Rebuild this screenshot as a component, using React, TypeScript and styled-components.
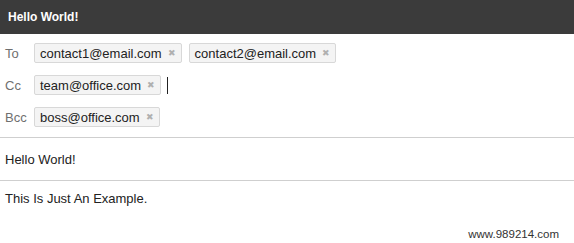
import React, { FC } from "react"
import styled, { createGlobalStyle } from "styled-components"

const GlobalStyle = createGlobalStyle`
  html, body {
    margin: 0;
    padding: 0;
    background: #fff;
  }
  body {
    font-family: "Liberation Sans", Arial, Helvetica, sans-serif;
    color: #222;
  }
`

const Page = styled.div`
  position: relative;
  width: 574px;
  height: 243px;
  overflow: hidden;
  background: #fff;
`

const Header = styled.header`
  height: 34px;
  background: #3b3b3b;
  display: flex;
  align-items: center;
  padding: 0 8px;
  color: #fff;
  font-size: 12px;
  font-weight: bold;
`

const Recipients = styled.div`
  display: flex;
  flex-direction: column;
  gap: 12px;
  padding: 9px 0 10px;
  border-bottom: 1px solid #cfcfcf;
`

const Row = styled.div`
  display: flex;
  align-items: center;
  height: 20px;
`

const Label = styled.span`
  width: 34px;
  padding-left: 5px;
  box-sizing: border-box;
  font-size: 13px;
  color: #6f6f6f;
`

const Chips = styled.div`
  display: flex;
  align-items: center;
  gap: 7px;
`

const Chip = styled.span`
  display: inline-flex;
  align-items: center;
  height: 20px;
  box-sizing: border-box;
  padding: 0 5px;
  background: #f4f4f4;
  border: 1px solid #d8d8d8;
  border-radius: 2px;
  font-size: 13px;
  color: #222;
`

const Remove = styled.span`
  margin-left: 6px;
  font-size: 9px;
  color: #b0b0b0;
  line-height: 1;
`

const Caret = styled.span`
  width: 1px;
  height: 17px;
  margin-left: -1px;
  background: #222;
`

const Subject = styled.div`
  height: 42px;
  display: flex;
  align-items: center;
  padding-left: 5px;
  font-size: 13px;
  border-bottom: 1px solid #cfcfcf;
`

const Body = styled.div`
  padding: 10px 5px 0;
  font-size: 13px;
`

const Watermark = styled.span`
  position: absolute;
  right: 15px;
  bottom: 3px;
  font-size: 11.5px;
  color: #333;
`

type Recipient = { label: string; emails: string[]; focused?: boolean }

const rows: Recipient[] = [
  { label: "To", emails: ["contact1@email.com", "contact2@email.com"] },
  { label: "Cc", emails: ["team@office.com"], focused: true },
  { label: "Bcc", emails: ["boss@office.com"] },
]

const App: FC = () => (
  <Page>
    <GlobalStyle />
    <Header>Hello World!</Header>
    <Recipients>
      { rows.map(r => (
        <Row key={ r.label }>
          <Label>{ r.label }</Label>
          <Chips>
            { r.emails.map(e => (
              <Chip key={ e }>
                { e }
                <Remove>✖</Remove>
              </Chip>
            )) }
            { r.focused && <Caret /> }
          </Chips>
        </Row>
      )) }
    </Recipients>
    <Subject>Hello World!</Subject>
    <Body>This Is Just An Example.</Body>
    <Watermark>www.989214.com</Watermark>
  </Page>
)

export default App
